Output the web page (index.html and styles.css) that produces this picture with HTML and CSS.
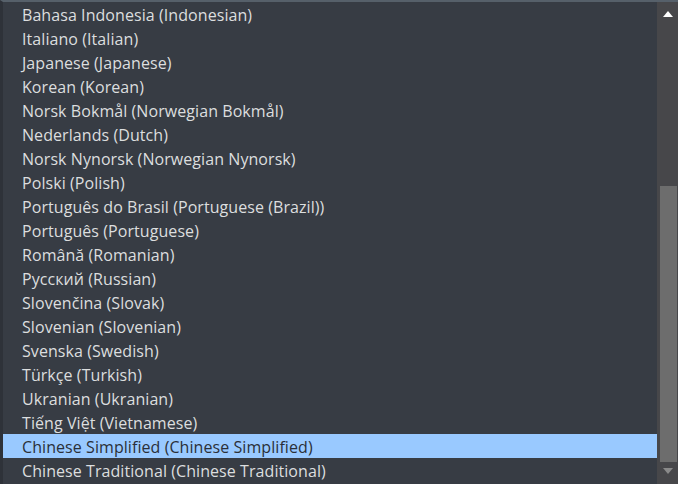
FILE: index.html
```html
<!DOCTYPE html>
<html>
<head>
<meta charset="utf-8">
<link rel="stylesheet" href="styles.css">
</head>
<body>
<div class="dropdown">
  <ul class="list">
    <li class="item">Bahasa Indonesia (Indonesian)</li>
    <li class="item">Italiano (Italian)</li>
    <li class="item">Japanese (Japanese)</li>
    <li class="item">Korean (Korean)</li>
    <li class="item">Norsk Bokmål (Norwegian Bokmål)</li>
    <li class="item">Nederlands (Dutch)</li>
    <li class="item">Norsk Nynorsk (Norwegian Nynorsk)</li>
    <li class="item">Polski (Polish)</li>
    <li class="item">Português do Brasil (Portuguese (Brazil))</li>
    <li class="item">Português (Portuguese)</li>
    <li class="item">Română (Romanian)</li>
    <li class="item">Русский (Russian)</li>
    <li class="item">Slovenčina (Slovak)</li>
    <li class="item">Slovenian (Slovenian)</li>
    <li class="item">Svenska (Swedish)</li>
    <li class="item">Türkçe (Turkish)</li>
    <li class="item">Ukranian (Ukranian)</li>
    <li class="item">Tiếng Việt (Vietnamese)</li>
    <li class="item selected">Chinese Simplified (Chinese Simplified)</li>
    <li class="item">Chinese Traditional (Chinese Traditional)</li>
  </ul>
  <div class="scrollbar">
    <div class="arrow up"></div>
    <div class="track"><div class="thumb"></div></div>
    <div class="arrow down"></div>
  </div>
</div>
</body>
</html>
```
FILE: styles.css
```css
html, body {
  margin: 0;
  padding: 0;
  background: #373c44;
}
.dropdown {
  width: 678px;
  height: 484px;
  box-sizing: border-box;
  display: flex;
  background: #373c44;
  border-top: 2px solid #56606a;
  border-left: 3px solid #2e3239;
  overflow: hidden;
}
.list {
  list-style: none;
  margin: 0;
  padding: 0;
  flex: 1;
  font-family: "Open Sans", Lato, sans-serif;
  font-size: 16px;
  letter-spacing: 0.07px;
  color: #dcdedf;
}
.item {
  box-sizing: border-box;
  height: 24px;
  padding-top: 2px;
  line-height: 22px;
  padding-left: 19px;
  white-space: nowrap;
}
.item.selected {
  background: #99c9ff;
  color: #2b3038;
}
.scrollbar {
  width: 21px;
  display: flex;
  flex-direction: column;
  align-items: center;
  background: #47474a;
}
.arrow {
  width: 0;
  height: 0;
  border-left: 5px solid transparent;
  border-right: 5px solid transparent;
}
.up {
  margin-top: 9px;
  border-bottom: 6px solid #ffffff;
}
.down {
  margin-top: 6px;
  margin-bottom: 10px;
  border-top: 6px solid #8a8a8a;
}
.track {
  flex: 1;
  width: 100%;
  display: flex;
  flex-direction: column;
  justify-content: flex-end;
  align-items: center;
}
.thumb {
  width: 17px;
  height: 276px;
  background: #6d6d6d;
  margin-left: 1px;
}
```
